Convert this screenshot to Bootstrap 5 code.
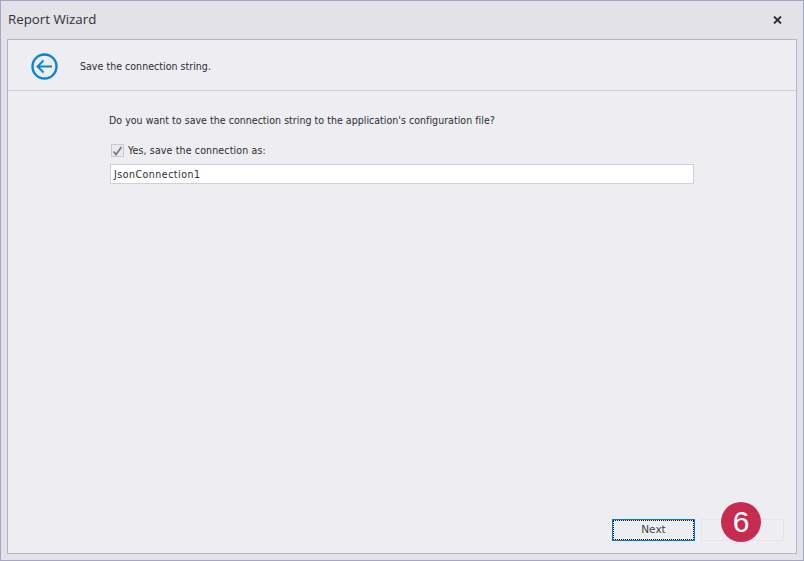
<!DOCTYPE html>
<html lang="en">
<head>
<meta charset="UTF-8">
<title>Report Wizard</title>
<link rel="stylesheet" href="https://cdn.jsdelivr.net/npm/bootstrap@5.3.3/dist/css/bootstrap.min.css">
<style>
html, body { height: 100%; }
body { background: #e3e2e8; font-family: "DejaVu Sans", sans-serif; font-stretch: condensed; font-size: 10.5px; letter-spacing: .04px; color: #2b2b33; }
.wiz-window { width: 804px; height: 561px; border: 1px solid #a4a6c6; background: #e3e2e8; }
.wiz-title { height: 38px; padding: 0 21px 0 7px; }
.wiz-title-text { font-family: "Open Sans", sans-serif; font-stretch: normal; font-size: 13.3px; letter-spacing: 0; color: #30303a; }
.wiz-panel { margin: 0 6px 6px 6px; border: 1px solid #b4b4cc; background: #eeedf2; }
.wiz-head { height: 51px; padding: 3px 0 0 23px; border-bottom: 1px solid #cdccdc; gap: 22px; }
.wiz-body { padding: 23px 0 0 101px; }
.wiz-question { line-height: 13px; }
.wiz-check-row { margin-top: 17px; gap: 4px; padding-left: 2px; line-height: 13px; letter-spacing: .15px; }
.wiz-check { width: 13px; height: 13px; border: 1px solid #c8c8d6; background: #e9e9ee; }
.wiz-input { width: 584px; height: 20px; margin: 7px 0 0 1px; padding: 0 3px; border: 1px solid #cfcfdd; background: #fff; line-height: 18px; letter-spacing: .5px; }
.wiz-btn { width: 83px; height: 22px; font-size: 10.5px; }
.wiz-btn-next { border: 1px solid #0078d4; outline: 1px dotted #111; outline-offset: -2px; background: #eeedf2; color: #444; padding: 0; border-radius: 0; }
.wiz-btn-off { border: 1px solid #e4e4ea; background: #eeedf2; }
.wiz-foot { padding: 0 12px 12px 0; gap: 6px; }
.wiz-step { top: -18px; left: 19px; width: 40px; height: 40px; background: #c72c50; color: #fff; font-family: "Liberation Sans", sans-serif; font-stretch: normal; font-size: 30px; line-height: 40px; letter-spacing: 0; }
</style>
</head>
<body>
<div class="wiz-window d-flex flex-column">
  <div class="wiz-title d-flex align-items-center justify-content-between flex-shrink-0">
    <span class="wiz-title-text">Report Wizard</span>
    <svg width="9" height="8" viewBox="0 0 9 8"><path d="M1 .5 8 7.5M8 .5 1 7.5" stroke="#2a2a2a" stroke-width="1.8" fill="none"/></svg>
  </div>
  <div class="wiz-panel flex-grow-1 d-flex flex-column">
    <div class="wiz-head d-flex align-items-center flex-shrink-0">
      <svg width="27" height="27" viewBox="0 0 27 27" fill="none" stroke="#0a84d6"><circle cx="13.5" cy="13.5" r="12" stroke-width="2.4"/><path d="M21 13.5H6.5M12.5 7.5l-6 6 6 6" stroke-width="1.9"/></svg>
      <span>Save the connection string.</span>
    </div>
    <div class="wiz-body flex-grow-1">
      <div class="wiz-question">Do you want to save the connection string to the application's configuration file?</div>
      <div class="wiz-check-row d-flex align-items-center">
        <span class="wiz-check d-flex align-items-center justify-content-center">
          <svg width="11" height="10" viewBox="0 0 11 10" fill="none"><path d="M1.5 5.5 4 8.5 9.5 1" stroke="#77777f" stroke-width="1.7"/></svg>
        </span>
        <span>Yes, save the connection as:</span>
      </div>
      <div class="wiz-input">JsonConnection1</div>
    </div>
    <div class="wiz-foot d-flex justify-content-end flex-shrink-0">
      <button type="button" class="btn wiz-btn wiz-btn-next">Next</button>
      <div class="wiz-btn wiz-btn-off position-relative">
        <div class="wiz-step position-absolute rounded-circle text-center">6</div>
      </div>
    </div>
  </div>
</div>
<script src="https://cdn.jsdelivr.net/npm/bootstrap@5.3.3/dist/js/bootstrap.bundle.min.js"></script>
</body>
</html>
